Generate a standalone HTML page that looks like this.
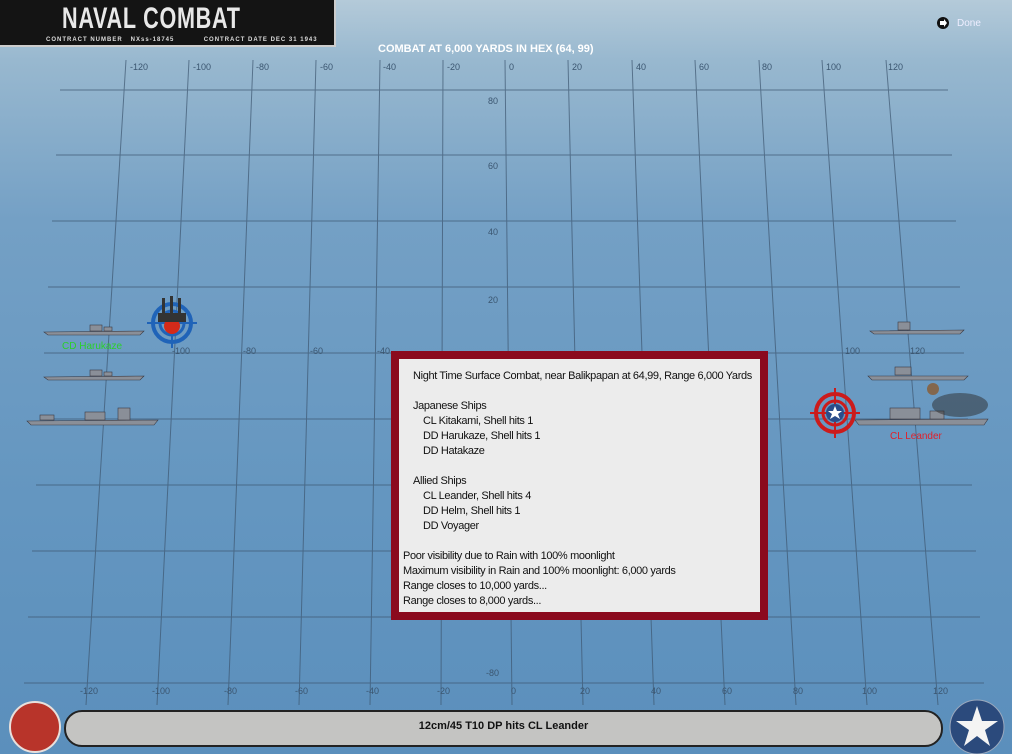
<!DOCTYPE html>
<html><head><meta charset="utf-8"><style>
*{margin:0;padding:0}
body{width:1012px;height:754px;overflow:hidden;position:relative;font-family:"Liberation Sans",sans-serif;
background:linear-gradient(180deg,#b4cad9 0px,#98b8cf 60px,#74a0c5 220px,#6496c0 500px,#5b8fbc 754px);}
.abs{position:absolute}
.lbl{position:absolute;font-size:9px;color:#3b5670}
#dlg{position:absolute;left:391px;top:351px;width:361px;height:253px;border:8px solid #8b0a1e;background:#ececec;font-size:11px;letter-spacing:-0.35px;color:#111}
#dlg div{position:absolute;white-space:nowrap}
</style></head><body>
<svg class="abs" style="left:0;top:0" width="1012" height="754">
<g stroke="#3d5670" stroke-width="1" opacity="0.7">
<line x1="60" y1="90" x2="948" y2="90"/>
<line x1="56" y1="155" x2="952" y2="155"/>
<line x1="52" y1="221" x2="956" y2="221"/>
<line x1="48" y1="287" x2="960" y2="287"/>
<line x1="44" y1="353" x2="964" y2="353"/>
<line x1="40" y1="419" x2="968" y2="419"/>
<line x1="36" y1="485" x2="972" y2="485"/>
<line x1="32" y1="551" x2="976" y2="551"/>
<line x1="28" y1="617" x2="980" y2="617"/>
<line x1="24" y1="683" x2="984" y2="683"/>
<line x1="126" y1="60" x2="86" y2="705"/>
<line x1="189" y1="60" x2="157" y2="705"/>
<line x1="253" y1="60" x2="228" y2="705"/>
<line x1="316" y1="60" x2="299" y2="705"/>
<line x1="380" y1="60" x2="370" y2="705"/>
<line x1="443" y1="60" x2="441" y2="705"/>
<line x1="505" y1="60" x2="512" y2="705"/>
<line x1="568" y1="60" x2="583" y2="705"/>
<line x1="632" y1="60" x2="654" y2="705"/>
<line x1="695" y1="60" x2="725" y2="705"/>
<line x1="759" y1="60" x2="796" y2="705"/>
<line x1="822" y1="60" x2="867" y2="705"/>
<line x1="886" y1="60" x2="938" y2="705"/>
</g>
<g fill="#8a8f98" stroke="#3a3a44" stroke-width="0.6">
<polygon points="44,332 144,331 140,335 48,335"/><rect x="90" y="325" width="12" height="6"/><rect x="104" y="327" width="8" height="4"/>
<polygon points="44,377 144,376 140,380 48,380"/><rect x="90" y="370" width="12" height="6"/><rect x="104" y="372" width="8" height="4"/>
<polygon points="27,421 158,420 154,425 31,425"/><rect x="85" y="412" width="20" height="8"/><rect x="118" y="408" width="12" height="12"/><rect x="40" y="415" width="14" height="5"/>
<polygon points="870,331 964,330 960,334 874,334"/><rect x="898" y="322" width="12" height="8"/>
<polygon points="868,376 968,376 964,380 872,380"/><rect x="895" y="367" width="16" height="8"/>
<polygon points="855,420 988,419 984,425 859,425"/><rect x="890" y="408" width="30" height="11"/><rect x="930" y="411" width="14" height="8"/>
</g>
<ellipse cx="960" cy="405" rx="28" ry="12" fill="#2b2b2b" opacity="0.5"/>
<circle cx="933" cy="389" r="6" fill="#8a5a30" opacity="0.8"/>
<g stroke="#1f63b8" fill="none"><circle cx="172" cy="323" r="19" stroke-width="4"/><circle cx="172" cy="323" r="12" stroke-width="3"/><line x1="147" y1="323" x2="197" y2="323" stroke-width="2"/><line x1="172" y1="298" x2="172" y2="348" stroke-width="2"/></g>
<circle cx="172" cy="326" r="8" fill="#d42a1a"/>
<g fill="#333"><rect x="158" y="313" width="28" height="9"/><rect x="162" y="298" width="3" height="16"/><rect x="170" y="296" width="3" height="18"/><rect x="178" y="298" width="3" height="16"/></g>
<g stroke="#cc1b1b" fill="none"><circle cx="835" cy="413" r="19" stroke-width="4"/><circle cx="835" cy="413" r="12" stroke-width="3"/><line x1="810" y1="413" x2="860" y2="413" stroke-width="2"/><line x1="835" y1="388" x2="835" y2="438" stroke-width="2"/></g>
<circle cx="835" cy="413" r="9" fill="#2a4d8a"/>
<polygon points="835,406 837,411 842,411 838,414 840,419 835,416 830,419 832,414 828,411 833,411" fill="#fff"/>
<circle cx="35" cy="727" r="25" fill="#b8342a" stroke="#e8e0dc" stroke-width="2"/>
<rect x="65" y="711" width="877" height="35" rx="17" fill="#c4c4c2" stroke="#222" stroke-width="2"/>
<circle cx="977" cy="727" r="27" fill="#2b4a7c" stroke="#9aa8bd" stroke-width="1"/>
<polygon points="977,706 982,721 998,721 985,730 990,746 977,736 964,746 969,730 956,721 972,721" fill="#f4f4f4"/>
<circle cx="943" cy="23" r="6" fill="#111"/><polygon points="940,21 944,21 944,19 947,23 944,27 944,25 940,25" fill="#fff"/>
</svg>
<div class="abs" style="left:0;top:0;width:336px;height:47px;background:#141414;border:2px solid #ccc;border-top:none;border-left:none;box-sizing:border-box"></div>
<div class="abs" style="left:62px;top:2px;font-size:30px;font-weight:bold;color:#e8e8e8;letter-spacing:1px;line-height:34px;transform:scaleX(0.72);transform-origin:0 0;white-space:nowrap">NAVAL COMBAT</div>
<div class="abs" style="left:46px;top:37px;font-size:6px;font-weight:bold;color:#ddd;letter-spacing:1px;white-space:nowrap">CONTRACT NUMBER &nbsp; NXss-18745 &nbsp; &nbsp; &nbsp; &nbsp; &nbsp; CONTRACT DATE DEC 31 1943</div>
<div class="abs" style="left:957px;top:18px;font-size:10px;color:#eef">Done</div>
<div class="abs" style="left:378px;top:43px;font-size:11px;font-weight:bold;color:#fff">COMBAT AT 6,000 YARDS IN HEX (64, 99)</div>
<div class="lbl" style="left:130px;top:62px">-120</div><div class="lbl" style="left:193px;top:62px">-100</div><div class="lbl" style="left:256px;top:62px">-80</div><div class="lbl" style="left:320px;top:62px">-60</div><div class="lbl" style="left:383px;top:62px">-40</div><div class="lbl" style="left:447px;top:62px">-20</div><div class="lbl" style="left:509px;top:62px">0</div><div class="lbl" style="left:572px;top:62px">20</div><div class="lbl" style="left:636px;top:62px">40</div><div class="lbl" style="left:699px;top:62px">60</div><div class="lbl" style="left:762px;top:62px">80</div><div class="lbl" style="left:826px;top:62px">100</div><div class="lbl" style="left:888px;top:62px">120</div>
<div class="lbl" style="left:488px;top:96px">80</div><div class="lbl" style="left:488px;top:161px">60</div><div class="lbl" style="left:488px;top:227px">40</div><div class="lbl" style="left:488px;top:295px">20</div><div class="lbl" style="left:486px;top:668px">-80</div>
<div class="lbl" style="left:172px;top:346px">-100</div><div class="lbl" style="left:243px;top:346px">-80</div><div class="lbl" style="left:310px;top:346px">-60</div><div class="lbl" style="left:377px;top:346px">-40</div><div class="lbl" style="left:845px;top:346px">100</div><div class="lbl" style="left:910px;top:346px">120</div>
<div class="lbl" style="left:80px;top:686px">-120</div><div class="lbl" style="left:152px;top:686px">-100</div><div class="lbl" style="left:224px;top:686px">-80</div><div class="lbl" style="left:295px;top:686px">-60</div><div class="lbl" style="left:366px;top:686px">-40</div><div class="lbl" style="left:437px;top:686px">-20</div><div class="lbl" style="left:511px;top:686px">0</div><div class="lbl" style="left:580px;top:686px">20</div><div class="lbl" style="left:651px;top:686px">40</div><div class="lbl" style="left:722px;top:686px">60</div><div class="lbl" style="left:793px;top:686px">80</div><div class="lbl" style="left:862px;top:686px">100</div><div class="lbl" style="left:933px;top:686px">120</div>
<div class="abs" style="left:62px;top:341px;font-size:10px;color:#2ad02a">CD Harukaze</div>
<div class="abs" style="left:890px;top:431px;font-size:10px;color:#e0202a">CL Leander</div>
<div class="abs" style="left:65px;top:720px;width:877px;text-align:center;font-size:11px;font-weight:bold;color:#111">12cm/45 T10 DP hits CL Leander</div>
<div id="dlg">
<div style="left:14px;top:11px">Night Time Surface Combat, near Balikpapan at 64,99, Range 6,000 Yards</div>
<div style="left:14px;top:41px">Japanese Ships</div>
<div style="left:24px;top:56px">CL Kitakami, Shell hits 1</div>
<div style="left:24px;top:71px">DD Harukaze, Shell hits 1</div>
<div style="left:24px;top:86px">DD Hatakaze</div>
<div style="left:14px;top:116px">Allied Ships</div>
<div style="left:24px;top:131px">CL Leander, Shell hits 4</div>
<div style="left:24px;top:146px">DD Helm, Shell hits 1</div>
<div style="left:24px;top:161px">DD Voyager</div>
<div style="left:4px;top:191px">Poor visibility due to Rain with 100% moonlight</div>
<div style="left:4px;top:206px">Maximum visibility in Rain and 100% moonlight: 6,000 yards</div>
<div style="left:4px;top:221px">Range closes to 10,000 yards...</div>
<div style="left:4px;top:236px">Range closes to 8,000 yards...</div>
</div>
</body></html>
